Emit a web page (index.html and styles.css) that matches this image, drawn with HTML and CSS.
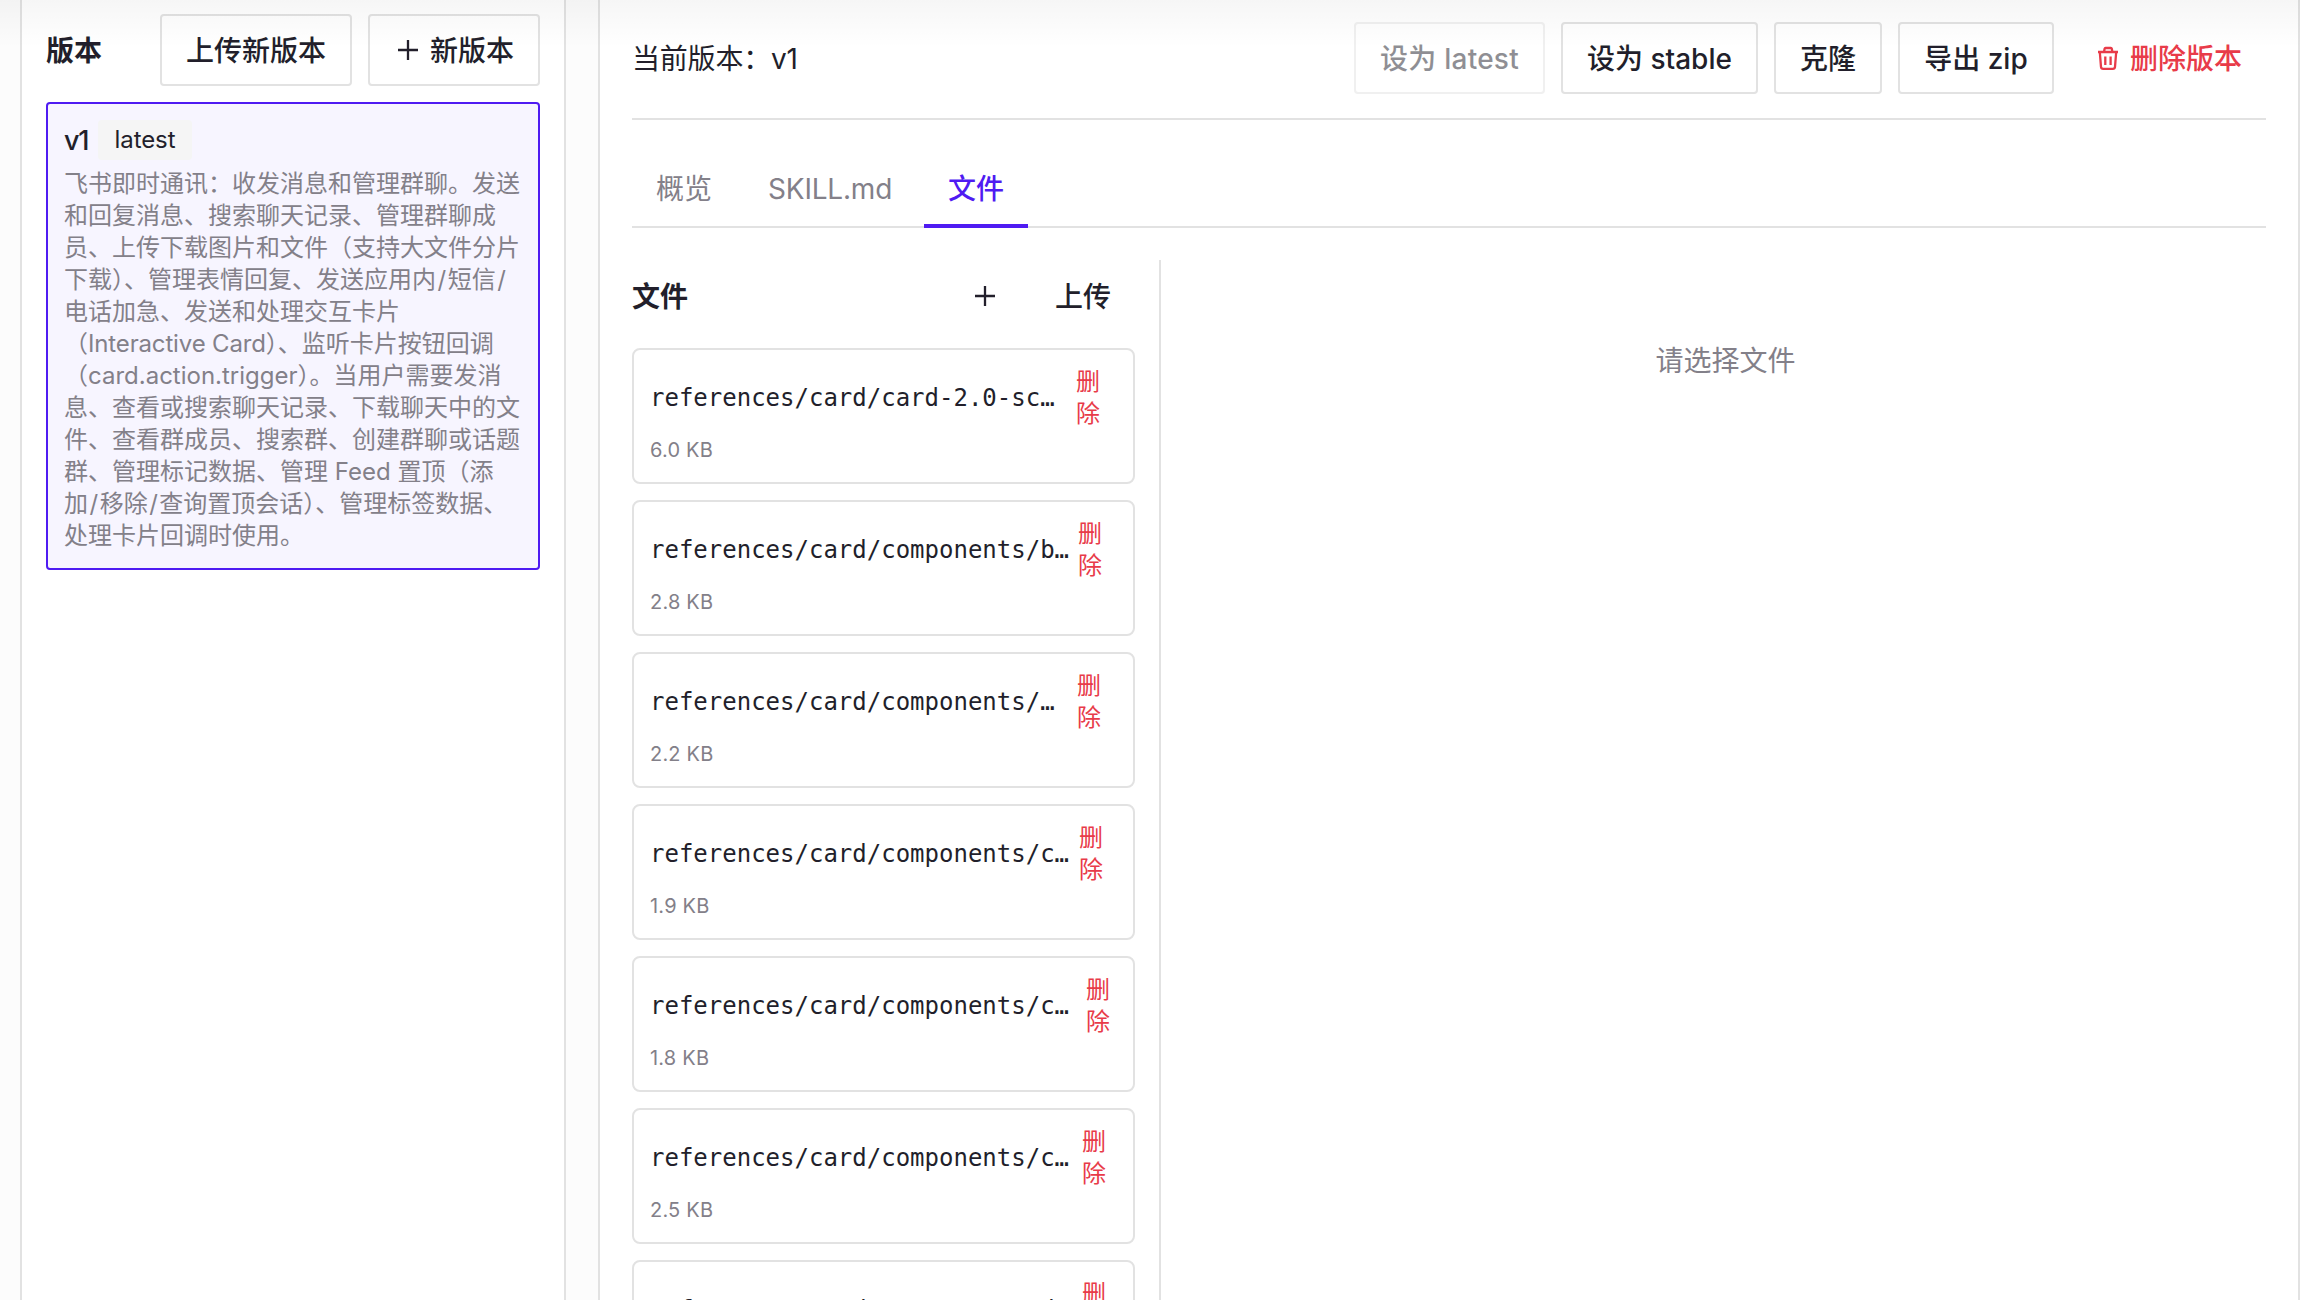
FILE: index.html
```html
<!DOCTYPE html>
<html lang="zh-CN">
<head>
    <meta charset="UTF-8">
    <meta name="viewport" content="width=device-width, initial-scale=1.0">
    <title>版本</title>
    <link rel="stylesheet" href="styles.css">
</head>
<body>
    <div class="page">
        <aside class="versions">
            <div class="versions-header">
                <h3 class="title">版本</h3>
                <div class="actions">
                    <button class="btn">上传新版本</button>
                    <button class="btn">
                        <svg class="icon" viewBox="0 0 28 28"><path d="M14 4v20M4 14h20"/></svg>
                        新版本
                    </button>
                </div>
            </div>
            <div class="version-card">
                <div class="version-name"><span class="version-no">v1</span><span class="tag">latest</span></div>
                <p class="version-desc">飞书即时通讯：收发消息和管理群聊。发送<br>和回复消息、搜索聊天记录、管理群聊成<br>员、上传下载图片和文件（支持大文件分片<br>下载）、管理表情回复、发送应用内<span class="slash">/</span>短信<span class="slash">/</span><br>电话加急、发送和处理交互卡片<br>（<span class="latin">Interactive Card</span>）、监听卡片按钮回调<br>（card.action.trigger）。当用户需要发消<br>息、查看或搜索聊天记录、下载聊天中的文<br>件、查看群成员、搜索群、创建群聊或话题<br>群、管理标记数据、管理 Feed 置顶（添<br>加<span class="slash">/</span>移除<span class="slash">/</span>查询置顶会话）、管理标签数据、<br>处理卡片回调时使用。</p>
            </div>
        </aside>

        <main class="detail">
            <div class="detail-header">
                <span class="current">当前版本：v1</span>
                <div class="actions">
                    <button class="btn btn-latest" disabled>设为 latest</button>
                    <button class="btn btn-stable">设为 stable</button>
                    <button class="btn">克隆</button>
                    <button class="btn btn-zip">导出 zip</button>
                    <button class="btn-text danger">
                        <svg class="icon" viewBox="0 0 28 28"><path d="M4 8h20M10 8l.6-3.2a1 1 0 0 1 1-.8h5.200a1 1 0 0 1 1 .8L18.400 8M5.800 8l1.200 14.800a2.200 2.200 0 0 0 2.200 2h9.600a2.200 2.200 0 0 0 2.200-2L22.200 8M11.300 12.500v8.500M16.600 12.500v8.500"/></svg>
                        删除版本
                    </button>
                </div>
            </div>

            <nav class="tabs">
                <a class="tab">概览</a>
                <a class="tab tab-skill">SKILL.md</a>
                <a class="tab active">文件</a>
            </nav>

            <div class="files">
                <section class="file-list">
                    <div class="file-list-header">
                        <h3 class="title">文件</h3>
                        <div class="file-actions">
                            <button class="btn-text">
                                <svg class="icon" viewBox="0 0 28 28"><path d="M14 4v20M4 14h20"/></svg>
                            </button>
                            <button class="btn-text">上传</button>
                        </div>
                    </div>
                    <div class="file">
                        <div class="file-row"><span class="file-name">references/card/card-2.0-sc…</span><a class="file-delete">删除</a></div>
                        <div class="file-size">6.0 KB</div>
                    </div>
                    <div class="file">
                        <div class="file-row"><span class="file-name">references/card/components/b…</span><a class="file-delete">删除</a></div>
                        <div class="file-size">2.8 KB</div>
                    </div>
                    <div class="file">
                        <div class="file-row"><span class="file-name">references/card/components/…</span><a class="file-delete">删除</a></div>
                        <div class="file-size">2.2 KB</div>
                    </div>
                    <div class="file">
                        <div class="file-row"><span class="file-name">references/card/components/c…</span><a class="file-delete">删除</a></div>
                        <div class="file-size">1.9 KB</div>
                    </div>
                    <div class="file">
                        <div class="file-row"><span class="file-name">references/card/components/c…</span><a class="file-delete">删除</a></div>
                        <div class="file-size">1.8 KB</div>
                    </div>
                    <div class="file">
                        <div class="file-row"><span class="file-name">references/card/components/c…</span><a class="file-delete">删除</a></div>
                        <div class="file-size">2.5 KB</div>
                    </div>
                    <div class="file">
                        <div class="file-row"><span class="file-name">references/card/components/d…</span><a class="file-delete">删除</a></div>
                    </div>
                </section>
                <section class="preview">请选择文件</section>
            </div>
        </main>
    </div>
    <div class="top-shadow"></div>
</body>
</html>
```

FILE: styles.css
```css
* {
    box-sizing: border-box;
}
body {
    margin: 0;
    height: 1300px;
    overflow: hidden;
    background-color: #fcfcfc;
    color: #221f2b;
    font-family: Inter, "Noto Sans CJK SC", sans-serif;
    font-size: 28px;
    line-height: 40px;
}
.page {
    display: flex;
    gap: 32px;
    height: 1300px;
    padding-left: 20px;
}
.versions {
    width: 546px;
    padding: 14px 24px 0;
    background-color: #fff;
    border: solid #e2e2e2;
    border-width: 0 2px;
}
.versions-header {
    display: flex;
    justify-content: space-between;
    align-items: center;
    margin-bottom: 16px;
}
.title {
    margin: 0;
    padding-top: 1px;
    font-size: 28px;
    font-weight: 600;
}
.actions {
    display: flex;
    gap: 16px;
}
.btn,
.btn-text {
    display: flex;
    align-items: center;
    justify-content: center;
    gap: 8px;
    height: 72px;
    padding: 1px 24px 0;
    background: none;
    border: none;
    color: inherit;
    font: inherit;
    font-weight: 500;
    white-space: nowrap;
}
.btn {
    background-color: #fff;
    border: 2px solid #e2e2e2;
    border-radius: 4px;
}
.btn:disabled {
    opacity: 0.5;
}
.btn-latest {
    width: 191px;
    letter-spacing: 0.25px;
}
.btn-stable {
    width: 197px;
}
.btn-zip {
    width: 156px;
}
.danger {
    color: #e83b49;
}
.icon {
    width: 28px;
    height: 28px;
    margin-top: -1px;
    fill: none;
    stroke: currentColor;
    stroke-width: 2.3;
}
.version-card {
    height: 468px;
    padding: 16px;
    background-color: #f7f5ff;
    border: 2px solid #4f1bf2;
    border-radius: 4px;
}
.version-name {
    display: flex;
    align-items: center;
    gap: 8px;
    height: 40px;
    margin-bottom: 8px;
}
.version-no {
    width: 26px;
    padding-top: 1px;
    font-size: 27px;
    font-weight: 500;
    letter-spacing: -1.2px;
}
.tag {
    width: 94px;
    background-color: #f5f5f5;
    border-radius: 4px;
    font-size: 24px;
    text-align: center;
    letter-spacing: -0.1px;
}
.version-desc {
    margin: 0;
    color: #838089;
    font-size: 24px;
    line-height: 32px;
    white-space: nowrap;
}
.slash {
    margin: 0 1.5px;
}
.latin {
    letter-spacing: -0.15px;
}
.detail {
    display: flex;
    flex-direction: column;
    width: 1702px;
    padding: 22px 32px 0;
    background-color: #fff;
    border: solid #e2e2e2;
    border-width: 0 2px;
}
.detail-header {
    display: flex;
    justify-content: space-between;
    height: 98px;
    border-bottom: 2px solid #e2e2e2;
}
.current {
    padding-top: 1px;
    line-height: 72px;
    letter-spacing: -0.2px;
}
.tabs {
    display: flex;
    gap: 8px;
    height: 108px;
    padding-top: 32px;
    border-bottom: 2px solid #e2e2e2;
}
.tab {
    height: 76px;
    padding: 1px 24px 0;
    color: #838089;
    line-height: 72px;
}
.tab-skill {
    width: 172px;
    letter-spacing: -0.2px;
}
.tab.active {
    color: #4f1bf2;
    font-weight: 500;
    border-bottom: 4px solid #4f1bf2;
}
.files {
    display: flex;
    flex: 1;
    min-height: 0;
    margin-top: 32px;
}
.file-list {
    width: 529px;
    padding-right: 24px;
    border-right: 2px solid #e2e2e2;
    overflow: hidden;
}
.file-list-header {
    display: flex;
    justify-content: space-between;
    align-items: center;
    height: 72px;
    margin-bottom: 16px;
}
.file-actions {
    display: flex;
    gap: 8px;
}
.file {
    height: 136px;
    margin-bottom: 16px;
    padding: 16px;
    border: 2px solid #e2e2e2;
    border-radius: 8px;
}
.file-row {
    display: flex;
    justify-content: space-between;
    align-items: center;
    height: 64px;
}
.file-name {
    font-family: "DejaVu Sans Mono", monospace;
    font-size: 24px;
    line-height: 32px;
    white-space: nowrap;
}
.file-delete {
    width: 41px;
    color: #e83b49;
    font-size: 24px;
    line-height: 32px;
}
.file:nth-child(3) .file-delete {
    width: 39px;
}
.file:nth-child(4) .file-delete {
    width: 40px;
}
.file:nth-child(5) .file-delete {
    width: 38px;
}
.file:nth-child(6) .file-delete {
    width: 31px;
}
.file:nth-child(7) .file-delete {
    width: 35px;
}
.file:nth-child(8) .file-delete {
    width: 35px;
}
.file-size {
    margin-top: 4px;
    color: #838089;
    font-size: 20px;
    line-height: 32px;
    letter-spacing: 0.2px;
}
.preview {
    flex: 1;
    padding: 81px 0 0 24px;
    color: #838089;
    text-align: center;
}
.top-shadow {
    position: absolute;
    top: 0;
    left: 0;
    width: 100%;
    height: 48px;
    background: linear-gradient(rgba(0, 0, 0, 0.035), rgba(0, 0, 0, 0));
    pointer-events: none;
}
```
